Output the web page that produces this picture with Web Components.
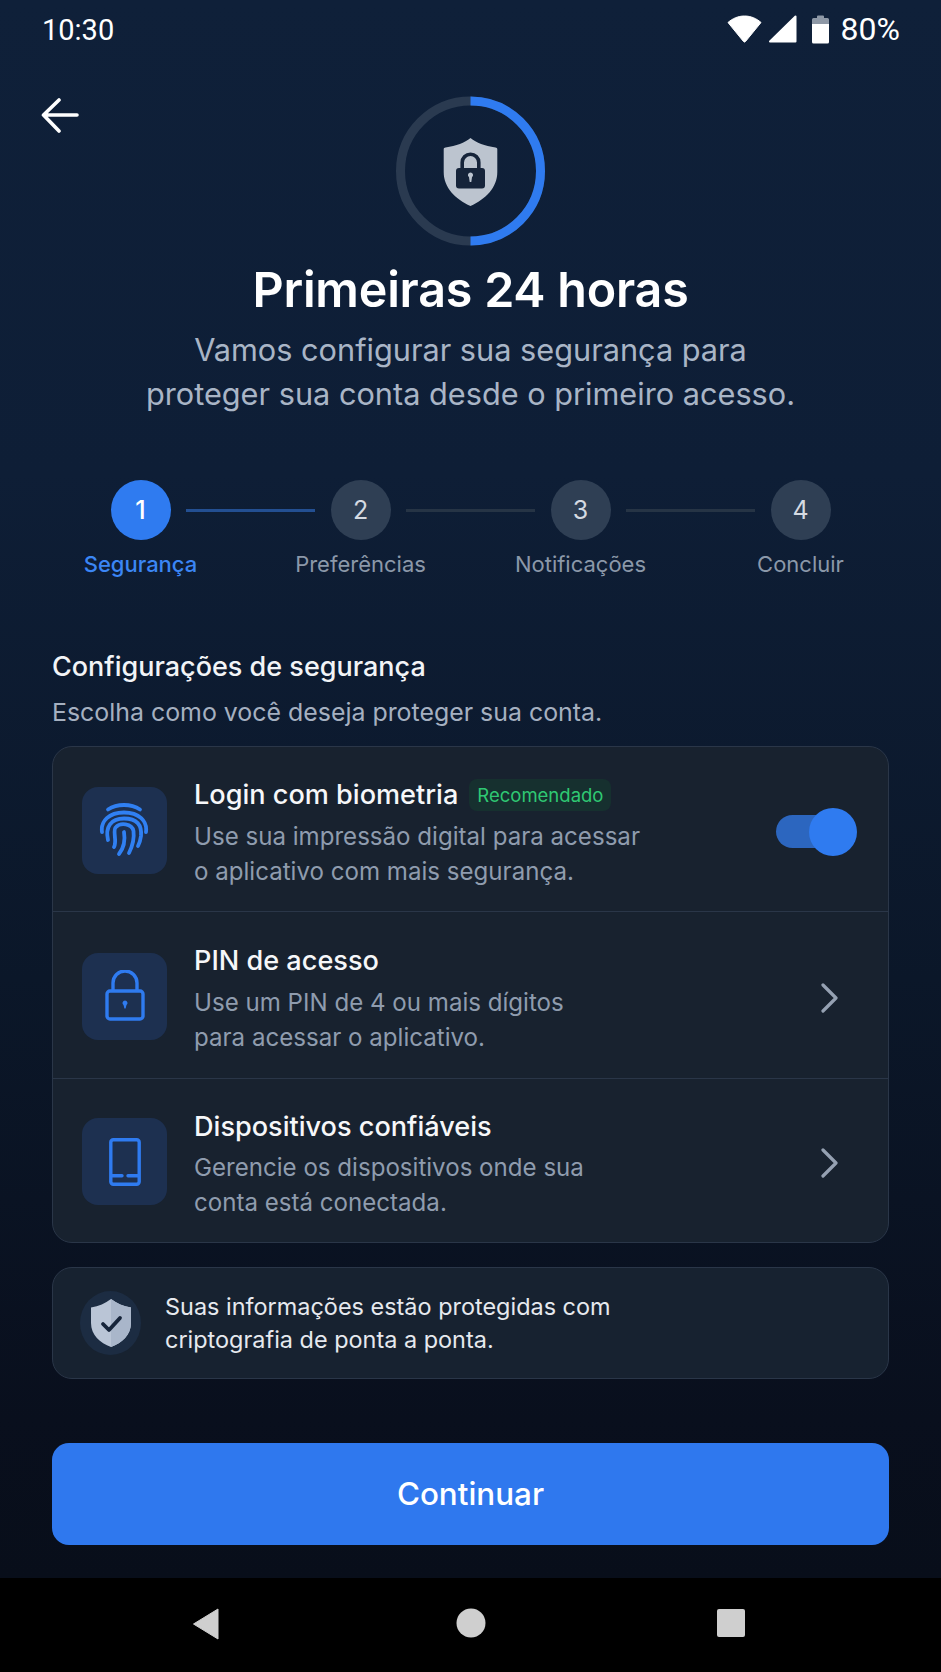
<!DOCTYPE html>
<html lang="pt"><head><meta charset="utf-8"><title>Primeiras 24 horas</title>
<style>
html,body{margin:0;padding:0;background:#000}
body{width:941px;height:1672px;overflow:hidden;font-family:Inter,"Liberation Sans",sans-serif}
</style></head><body>
<app-screen>
  <status-bar slot="status"></status-bar>
  <hero-head></hero-head>
  <step-indicator></step-indicator>
  <section-head heading="Configurações de segurança" sub="Escolha como você deseja proteger sua conta."></section-head>
  <settings-card>
    <setting-row style="height:165px" icon="finger" heading="Login com biometria" badge="Recomendado" l1="Use sua impressão digital para acessar" l2="o aplicativo com mais segurança." action="toggle"></setting-row>
    <setting-row style="height:167px" icon="lock" heading="PIN de acesso" l1="Use um PIN de 4 ou mais dígitos" l2="para acessar o aplicativo." action="chevron"></setting-row>
    <setting-row style="height:163px" icon="phone" heading="Dispositivos confiáveis" l1="Gerencie os dispositivos onde sua" l2="conta está conectada." action="chevron"></setting-row>
  </settings-card>
  <info-note></info-note>
  <primary-button>Continuar</primary-button>
  <nav-bar slot="nav"></nav-bar>
</app-screen>
<script>
function def(name, css, html){
  customElements.define(name, class extends HTMLElement{
    connectedCallback(){
      if(this.shadowRoot) return;
      const r=this.attachShadow({mode:'open'});
      r.innerHTML='<style>'+css+'</style>'+(typeof html==='function'?html(this):html);
    }
  });
}
const FONT='Inter,"Liberation Sans",sans-serif';
def('app-screen',`
:host{display:flex;flex-direction:column;width:941px;height:1672px;background:#000;font-family:${FONT};color:#fff}
.main{flex:none;height:1578px;display:flex;flex-direction:column;background:linear-gradient(180deg,#0f2039 0%,#0e1e36 30%,#0b1729 62%,#090f1d 90%,#080e1a 100%)}
`,`<div class="main"><slot name="status"></slot><slot></slot></div><slot name="nav"></slot>`);

def('status-bar',`
:host{display:flex;align-items:center;justify-content:space-between;height:60px;padding:0 41px 0 42px;font-family:Roboto,sans-serif;font-size:29px;color:#fff;flex:none}
.r{display:flex;align-items:center;gap:0;font-size:32px;margin-top:-2px}
svg{display:block}
`,`<span>10:30</span><div class="r">
<svg width="35" height="30" viewBox="0 0 35 30" style="margin-right:6px"><path d="M1 8.500C5.500 4.500 11 2 17.500 2S29.500 4.500 34 8.500L18.500 27.500a1.300 1.300 0 0 1-2 0Z" fill="#fff" stroke="#fff" stroke-linejoin="round"/></svg>
<svg width="29" height="30" viewBox="0 0 29 30" style="margin-right:14px"><path d="M27.500 2.500V27.500H2Z" fill="#fff" stroke="#fff" stroke-width="2" stroke-linejoin="round"/></svg>
<svg width="19" height="30" viewBox="0 0 19 30" style="margin-right:11px"><path d="M6 2.500a1 1 0 0 1 1-1h5a1 1 0 0 1 1 1V4h3.500a1.500 1.500 0 0 1 1.500 1.500V12H1V5.500A1.500 1.500 0 0 1 2.500 4H6Z" fill="#8e98a6"/><path d="M1 10h17v18a1.500 1.500 0 0 1-1.500 1.500h-14A1.500 1.500 0 0 1 1 28Z" fill="#fff"/></svg>
<span>80%</span></div>`);

def('hero-head',`
:host{display:block;position:relative;flex:none;height:420px;text-align:center}
.back{position:absolute;left:40px;top:38px}
.ring{display:block;margin:36px auto 0;width:150px;height:150px;transform:translateX(-.5px)}
h1{margin:15px 0 0;font-size:48.400px;line-height:58px;font-weight:600;letter-spacing:-.2px;color:#fff}
p{margin:9px 0 0;font-size:30.700px;line-height:44px;color:#a9b5c6}
`,`<svg class="back" width="40" height="36" viewBox="0 0 40 36"><path d="M37 17H4M19 2 3.500 17 19 33" fill="none" stroke="#fff" stroke-width="3.600" stroke-linecap="round" stroke-linejoin="round"/></svg>
<svg class="ring" viewBox="0 0 150 150">
<circle cx="75" cy="75" r="70" fill="none" stroke="#2a3a50" stroke-width="9"/>
<path d="M75 5A70 70 0 0 1 75 145" fill="none" stroke="#2f7bf0" stroke-width="9"/>
<path d="M75 42c6 5 14 7.500 25 9.500 1 .2 1.800.8 1.800 1.700V76c0 16-12 27-26.800 34C60.200 103 48.200 92 48.200 76V53.200c0-.9.800-1.500 1.800-1.700C61 49.500 69 47 75 42Z" fill="#bcc4cf"/>
<path d="M66.700 73V66.500a8.300 8.300 0 0 1 16.600 0V73" fill="none" stroke="#16243a" stroke-width="3.600"/>
<rect x="60.500" y="72" width="29" height="20.500" rx="3" fill="#16243a"/>
<path d="M75 76.500a2.600 2.600 0 0 1 1.500 4.700L75.800 86h-1.600l-.7-4.800A2.600 2.600 0 0 1 75 76.500Z" fill="#bcc4cf"/>
</svg>
<h1>Primeiras 24 horas</h1>
<p>Vamos configurar sua segurança para<br>proteger sua conta desde o primeiro acesso.</p>`);

def('step-indicator',`
:host{display:block;flex:none;height:169px}
.c{display:flex;align-items:center;justify-content:center}
.n{width:60px;height:60px;border-radius:50%;background:#2f3f54;color:#d5dae2;font-size:25px;display:flex;align-items:center;justify-content:center;flex:none}
.n.on{background:#2f7bf0;color:#fff;font-weight:500}
.l{width:129px;height:3px;margin:0 15.500px;background:#263445;flex:none}
.l.on{background:#234f92}
.g{display:grid;grid-template-columns:repeat(4,220px);justify-content:center;margin-top:9px}
.g span{text-align:center;font-size:22px;line-height:30px;color:#8b98a9}
.g span.on{color:#3b86f5;font-weight:500}
`,`<div class="c"><div class="n on">1</div><div class="l on"></div><div class="n">2</div><div class="l"></div><div class="n">3</div><div class="l"></div><div class="n">4</div></div>
<div class="g"><span class="on">Segurança</span><span>Preferências</span><span>Notificações</span><span>Concluir</span></div>`);

def('section-head',`
:host{display:block;flex:none;height:97px;padding:0 52px}
h2{margin:0;font-size:27px;line-height:36px;font-weight:500;color:#f2f4f7}
p{margin:9px 0 0;font-size:24.900px;line-height:36px;color:#a5b0c0}
`,h=>`<h2>${h.getAttribute('heading')}</h2><p>${h.getAttribute('sub')}</p>`);

def('settings-card',`
:host{display:block;flex:none;margin:0 52px;width:837px;box-sizing:border-box;border:1px solid #2a3648;border-radius:20px;background:#18222f;overflow:hidden}
::slotted(setting-row:not(:last-child)){border-bottom:1px solid #2a3648}
`,`<slot></slot>`);

const ICONS={
finger:`<svg width="50" height="54" viewBox="0 0 50 54" style="margin-left:-2px" fill="none" stroke="#3080f2" stroke-width="3.800" stroke-linecap="round">
<path d="M9 6.500C18 .5 32 .5 41 6.500"/>
<path d="M3 29C1.500 18 10 9.500 25 9.500S48.500 18 47 29"/>
<path d="M9 37C6 24 12 15.500 25 15.500S43 22 42 33C41.500 37 40.500 40 39 43"/>
<path d="M15 44C18.500 38 13 27 17 24C21 19.500 33 20 34.500 28C35.500 36 33.500 43 30 50"/>
<path d="M25 29C26.500 38 24 46 20 51"/></svg>`,
lock:`<svg width="40" height="52" viewBox="0 0 40 52" fill="none" stroke="#2f7bf0" stroke-width="3.400" stroke-linejoin="round">
<path d="M8 22V13a12 12 0 0 1 24 0V22"/><rect x="2" y="21" width="36" height="28" rx="3"/>
<path d="M20 30.500a2.500 2.500 0 0 1 1.500 4.500L20.600 38.500h-1.200L18.500 35A2.500 2.500 0 0 1 20 30.500Z" fill="#2f7bf0" stroke="none"/></svg>`,
phone:`<svg width="32" height="48" viewBox="0 0 32 48" fill="none" stroke="#2f7bf0" stroke-width="3.400" stroke-linecap="round">
<rect x="1.800" y="1.800" width="28.400" height="44.400" rx="2.500"/><path d="M3 37.800h10M19 37.800h10"/></svg>`};

def('setting-row',`
:host{display:flex;align-items:center;box-sizing:border-box;padding-left:29px;position:relative}
.i{width:85px;height:87px;border-radius:16px;background:#1d3050;display:flex;align-items:center;justify-content:center;flex:none;margin:2px 27px 0 0}
.t{flex:1;min-width:0;padding-top:7px}
.h{display:flex;align-items:center;height:36px;font-size:27.100px;font-weight:500;color:#f6f7f9;margin-bottom:6px}
.b{margin-left:11px;height:32px;padding:0 8px;border-radius:8px;background:#16302f;color:#2fc873;font-size:18.500px;font-weight:400;display:flex;align-items:center}
.d{font-size:24.100px;line-height:35px;color:#8f9cae}
.a{flex:none;display:flex;align-items:center;justify-content:center;margin-top:5px}
.sw{width:81px;height:48px;position:relative;margin-right:31px}
.sw i{position:absolute;left:0;top:7px;width:60px;height:33px;border-radius:17px;background:#2c66bf}
.sw b{position:absolute;right:0;top:0;width:48px;height:48px;border-radius:50%;background:#2f7bf0}
.ch{margin-right:50px}
`,h=>{
 const a=h.getAttribute('action');
 const bd=h.getAttribute('badge');
 return `<div class="i">${ICONS[h.getAttribute('icon')]}</div><div class="t"><div class="h">${h.getAttribute('heading')}${bd?`<span class="b">${bd}</span>`:''}</div><div class="d">${h.getAttribute('l1')}<br>${h.getAttribute('l2')}</div></div>
 <div class="a">${a==='toggle'?'<div class="sw"><i></i><b></b></div>':'<svg class="ch" width="18" height="30" viewBox="0 0 18 30"><path d="M3 2 16 15 3 28" fill="none" stroke="#95a1b2" stroke-width="3.200" stroke-linecap="round" stroke-linejoin="round"/></svg>'}</div>`;
});

def('info-note',`
:host{display:flex;align-items:center;flex:none;margin:24px 52px 0;width:837px;height:112px;box-sizing:border-box;border:1px solid #2a3648;border-radius:20px;background:#172230;padding-left:27px}
.i{width:61px;height:64px;border-radius:50%;background:#1c2c42;display:flex;align-items:center;justify-content:center;flex:none;margin-right:24px}
.t{font-size:23.450px;line-height:33.500px;color:#e6e9ee}
`,`<div class="i"><svg width="42" height="50" viewBox="0 0 42 50"><path d="M21 1c6 4.500 12 7 20 8.500V25c0 12-9 20-20 24C10 45 1 37 1 25V9.500C9 8 15 5.500 21 1Z" fill="#bac5d6"/><path d="M21 1c6 4.500 12 7 20 8.500V25c0 12-9 20-20 24Z" fill="#a9b6ca"/><path d="M13 26l6 6 11-12" fill="none" stroke="#16243a" stroke-width="3.800" stroke-linecap="round" stroke-linejoin="round"/></svg></div>
<div class="t">Suas informações estão protegidas com<br>criptografia de ponta a ponta.</div>`);

def('primary-button',`
:host{display:flex;align-items:center;justify-content:center;flex:none;margin:64px 52px 0;width:837px;height:102px;border-radius:17px;background:#2f78ee;color:#fff;font-size:31.400px;font-weight:500}
`,`<slot></slot>`);

def('nav-bar',`
:host{display:flex;align-items:center;justify-content:center;flex:none;height:94px;background:#000}
.w{display:grid;grid-template-columns:repeat(3,260px);justify-items:center;margin-top:-2px}
`,`<div class="w">
<svg width="28" height="32" viewBox="0 0 28 32" style="margin-left:-9px"><path d="M1.500 16 26 1v30Z" fill="#cfcfcf" stroke="#cfcfcf" stroke-linejoin="round"/></svg>
<svg width="30" height="30" viewBox="0 0 30 30"><circle cx="15" cy="15" r="14.500" fill="#cfcfcf"/></svg>
<svg width="30" height="30" viewBox="0 0 30 30"><rect x="1" y="1" width="28" height="28" rx="2" fill="#cfcfcf"/></svg></div>`);
</script>
</body></html>
